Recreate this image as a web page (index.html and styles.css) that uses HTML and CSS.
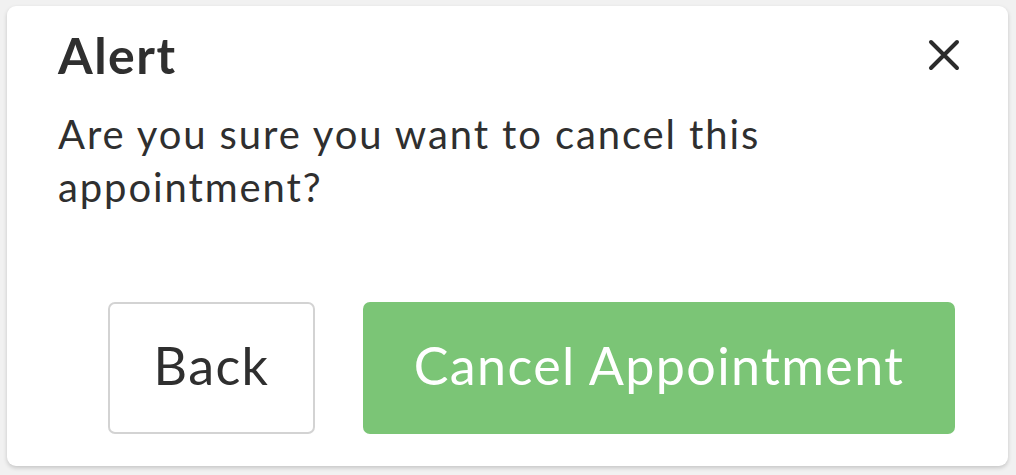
FILE: index.html
```html
<!DOCTYPE html>
<html lang="en">
<head>
    <meta charset="UTF-8">
    <meta name="viewport" content="width=device-width, initial-scale=1.0">
    <title>Alert</title>
    <link rel="stylesheet" href="styles.css">
</head>
<body>
    <div class="alert-modal">
        <div class="alert-header">
            <h1>Alert</h1>
            <button class="close-btn" aria-label="Close">
                <svg width="32" height="32" viewBox="0 0 32 32">
                    <path d="M3 3 L29 29 M29 3 L3 29" stroke="#2b2b2b" stroke-width="4" stroke-linecap="round"/>
                </svg>
            </button>
        </div>

        <p class="alert-text">Are you sure you want to cancel this appointment?</p>

        <div class="alert-actions">
            <button class="btn btn-back">Back</button>
            <button class="btn btn-confirm">Cancel Appointment</button>
        </div>
    </div>
</body>
</html>
```

FILE: styles.css
```css
body {
    margin: 0;
    padding: 6px 8px 9px 7px;
    background: #f1f1f1;
    font-family: 'Lato', 'Open Sans', sans-serif;
    color: #2f2f2f;
}

.alert-modal {
    height: 460px;
    box-sizing: border-box;
    background: #fff;
    border-radius: 9px;
    box-shadow: 0 2px 4px rgba(0, 0, 0, 0.18);
    padding: 17px 48px 32px 51px;
    display: flex;
    flex-direction: column;
}

.alert-header {
    display: flex;
    justify-content: space-between;
    align-items: center;
}

.alert-header h1 {
    margin: 0;
    font-size: 50px;
    line-height: 64px;
    font-weight: 700;
    letter-spacing: 1.5px;
}

.close-btn {
    background: none;
    border: none;
    padding: 0;
    width: 32px;
    height: 32px;
    cursor: pointer;
}

.alert-text {
    margin: 21px 0 0;
    font-size: 40px;
    line-height: 53px;
    letter-spacing: 1.9px;
    max-width: 880px;
}

.alert-actions {
    margin-top: auto;
    display: flex;
    justify-content: flex-end;
    gap: 48px;
    padding-right: 5px;
}

.btn {
    height: 132px;
    padding: 0 0 6px;
    border-radius: 7px;
    font-family: inherit;
    font-size: 52px;
    letter-spacing: 1.4px;
    cursor: pointer;
}

.btn-back {
    width: 207px;
    background: #fff;
    border: 2px solid #d3d3d3;
    color: #2f2f2f;
}

.btn-confirm {
    width: 592px;
    background: #7bc576;
    border: none;
    color: #fff;
}
```
